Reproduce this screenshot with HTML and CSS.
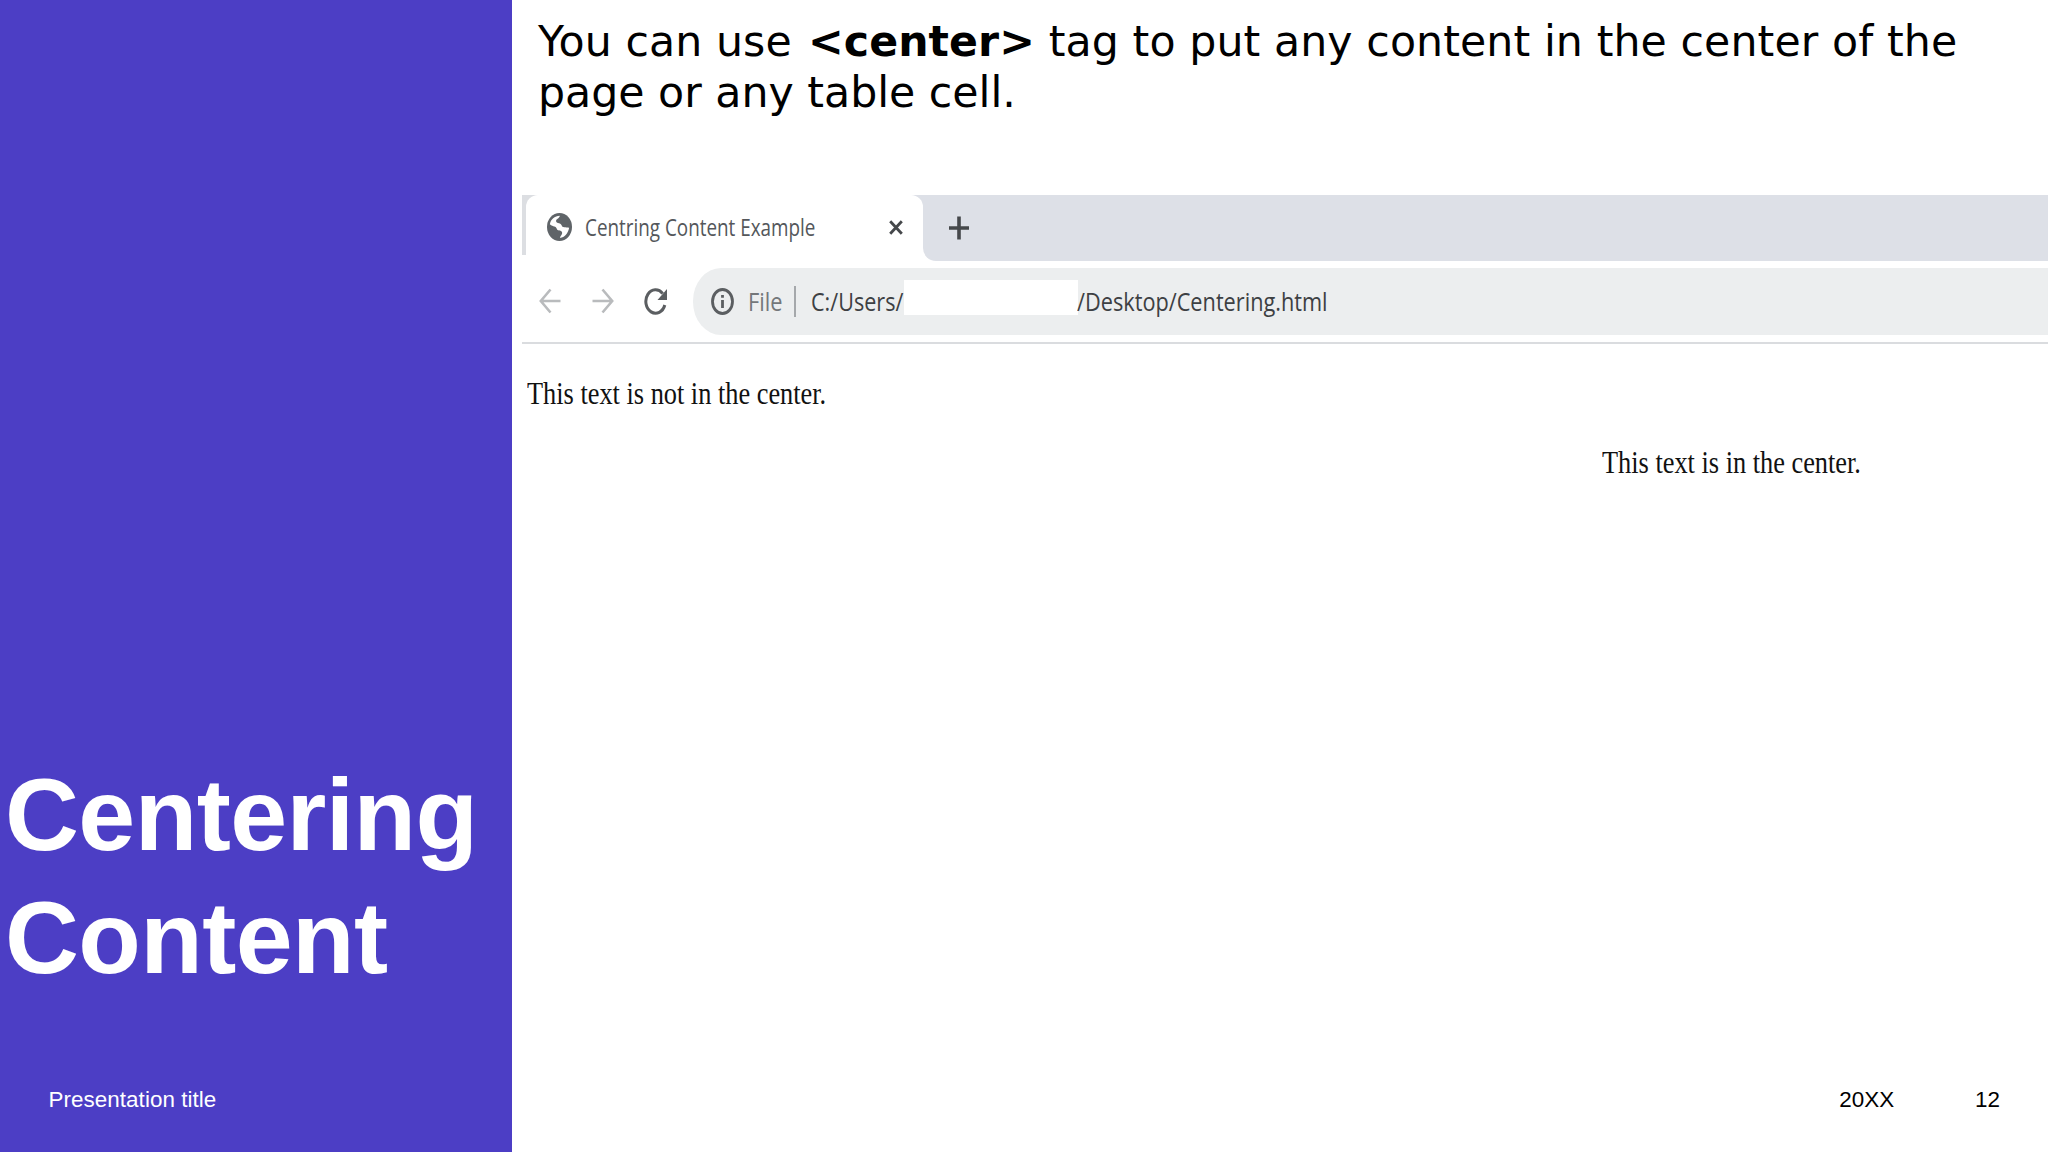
FILE: index.html
```html
<!DOCTYPE html>
<html lang="en">
<head>
  <meta charset="UTF-8">
  <meta name="viewport" content="width=device-width, initial-scale=1.0">
  <title>Centering Content</title>
  <link rel="stylesheet" href="styles.css">
</head>
<body>
  <div class="slide">
    <!-- Left panel -->
    <aside class="side">
      <h1 class="title">Centering<br>Content</h1>
      <p class="footer-title">Presentation title</p>
    </aside>

    <main class="main">
      <p class="intro"><span class="line-one">You can use <b>&lt;center&gt;</b> tag to put any content in the center of the</span><br>page or any table cell.</p>

      <!-- Browser window -->
      <div class="browser">
        <div class="tabs">
          <div class="tab-edge"></div>
          <div class="tab">
            <svg class="globe" viewBox="2 2 20 20" preserveAspectRatio="none">
              <circle cx="12" cy="12" r="10" fill="#5f6468"/>
              <path fill="#fff" d="M4.300 10C5 6.500 8 4.200 12.300 4C11.800 6 9 6.300 9.300 8C10 9.600 13.200 8.600 13.800 11C14 12.800 17 12 19.700 12.600C19 16.500 16 19.500 12.500 19.900C12.500 18 14.600 17.500 14 15.500C12.700 14 10.300 15 9.800 13.300C9.300 11.200 7 12 4.300 10z"/>
            </svg>
            <span class="tab-title">Centring Content Example</span>
            <svg class="close" viewBox="0 0 14 15"><path d="M1.200 1.200L12.800 13.800M12.800 1.200L1.200 13.800"/></svg>
          </div>
          <div class="strip">
            <svg class="plus" viewBox="0 0 20 24"><path d="M10 0.500V23.500M0 12H20"/></svg>
          </div>
        </div>

        <div class="toolbar">
          <svg class="arrow" viewBox="0 0 22 26"><path d="M21.500 13H2M11.500 1.500L1.800 13l9.700 11.500"/></svg>
          <svg class="arrow forward" viewBox="0 0 22 26"><path d="M0.500 13H20M10.500 1.500L20.200 13l-9.700 11.500"/></svg>
          <svg class="reload" viewBox="0 0 24 27">
            <path class="ring" d="M20.800 17A9.700 11.700 0 1 1 18.700 5.600"/>
            <path class="tip" d="M23 1V12H13.500z"/>
          </svg>
          <div class="address">
            <svg class="info" viewBox="0 0 23 27">
              <ellipse cx="11.500" cy="13.500" rx="10" ry="12"/>
              <path d="M11.500 12V20M11.500 7V9.800"/>
            </svg>
            <span class="scheme">File</span>
            <span class="divider"></span>
            <span class="path path-start">C:/Users/</span>
            <span class="blank"></span>
            <span class="path path-end">/Desktop/Centering.html</span>
          </div>
        </div>

        <div class="page">
          <p class="text-left">This text is not in the center.</p>
          <p class="text-center">This text is in the center.</p>
        </div>
      </div>

      <div class="footer">
        <span class="year">20XX</span>
        <span class="number">12</span>
      </div>
    </main>
  </div>
</body>
</html>
```
FILE: styles.css
```css
* {
  box-sizing: border-box;
}

body {
  margin: 0;
  background: #fff;
  font-family: "Liberation Sans", Arial, sans-serif;
  overflow: hidden;
}

p, h1 {
  margin: 0;
  font-weight: normal;
}

svg {
  display: block;
  flex: none;
  fill: none;
}

.slide {
  display: flex;
  width: 2048px;
  height: 1152px;
}

/* Left panel */
.side {
  width: 512px;
  flex: none;
  background: #4c3ec5;
  color: #fff;
  display: flex;
  flex-direction: column;
  justify-content: flex-end;
}

.title {
  padding-left: 5px;
  font-size: 102.4px;
  line-height: 122.9px;
  font-weight: bold;
  letter-spacing: -0.6px;
  white-space: nowrap;
}

.footer-title {
  margin-top: 87px;
  padding: 0 0 39px 48.5px;
  font-size: 22.4px;
  line-height: 26px;
  letter-spacing: 0.06px;
}

.main {
  width: 1536px;
  display: flex;
  flex-direction: column;
}

.intro {
  height: 195px;
  padding: 16px 0 0 26px;
  font-family: "DejaVu Sans", Verdana, sans-serif;
  font-size: 42.67px;
  line-height: 51.2px;
  color: #000;
  white-space: nowrap;
}

.line-one {
  letter-spacing: 0.09px;
}

.line-one b {
  margin-left: 2.5px;
}

/* Browser window */
.browser {
  flex: 1;
  margin-left: 10px;
  font-family: "Open Sans", "Noto Sans", sans-serif;
}

/* the small gray square shows behind the tab's top right corner */
.tabs {
  display: flex;
  height: 66px;
  background: linear-gradient(#dde0e7, #dde0e7) 381px 0 / 20px 20px no-repeat;
}

.tab-edge {
  width: 16px;
  height: 60px;
  margin-right: -12px;
  background: #dcdee2;
}

.tab {
  position: relative;
  width: 397px;
  height: 66px;
  padding: 0 20px 2px 21px;
  display: flex;
  align-items: center;
  background: #fff;
  border-radius: 12px 12px 0 0;
}

.globe {
  width: 25px;
  height: 28px;
  margin-right: 13px;
}

.tab-title,
.scheme,
.path {
  flex: none;
  white-space: nowrap;
  transform-origin: left center;
}

.tab-title {
  width: 304px;
  font-size: 23px;
  color: #54575b;
  transform: scaleX(0.82);
}

.close {
  width: 14px;
  height: 15px;
  stroke: #45484b;
  stroke-width: 2.8;
}

.strip {
  flex: 1;
  padding: 21px 0 0 26px;
  background: #dde0e7;
  border-bottom-left-radius: 13px;
}

.plus {
  width: 20px;
  height: 24px;
  stroke: #45484b;
  stroke-width: 3.6;
}

.toolbar {
  height: 83px;
  padding: 7px 0 8px 17px;
  display: flex;
  align-items: center;
  border-bottom: 2px solid #dadcdf;
}

.arrow {
  width: 22px;
  height: 26px;
  stroke: #b9bbbd;
  stroke-width: 2.6;
}

.forward {
  margin-left: 31px;
}

.reload {
  width: 24px;
  height: 27px;
  margin: 0 25px 0 30px;
}

.ring {
  stroke: #5b5e61;
  stroke-width: 3;
}

.tip {
  fill: #5b5e61;
}

.address {
  flex: 1;
  height: 67px;
  padding-left: 18px;
  display: flex;
  align-items: center;
  background: #eceeef;
  border-radius: 28px 0 0 28px / 33px 0 0 33px;
  font-size: 26px;
  color: #3d4043;
}

.info {
  width: 23px;
  height: 27px;
  stroke: #5b5e61;
  stroke-width: 2.8;
}

.scheme {
  width: 46px;
  margin-left: 14px;
  color: #74777a;
  transform: scaleX(0.84);
}

.divider {
  width: 2px;
  height: 31px;
  margin-right: 15px;
  background: #a5a8ab;
}

.path {
  transform: scaleX(0.83);
}

.path-start {
  width: 93px;
}

.path-end {
  margin-left: -1px;
  transform: scaleX(0.835);
}

.blank {
  width: 174px;
  height: 35px;
  margin-bottom: 8px;
  background: #fff;
}

.page {
  padding: 30px 0 0 5px;
  font-family: "Liberation Serif", "Times New Roman", serif;
  font-size: 32px;
  line-height: 38px;
  color: #111;
  white-space: nowrap;
}

.text-left,
.text-center {
  transform: scaleX(0.823);
  transform-origin: left center;
}

.text-center {
  margin: 31px 0 0 1075px;
}

.footer {
  display: flex;
  justify-content: flex-end;
  gap: 81px;
  padding: 0 48px 39px 0;
  font-size: 22.4px;
  line-height: 26px;
  color: #000;
}
```
